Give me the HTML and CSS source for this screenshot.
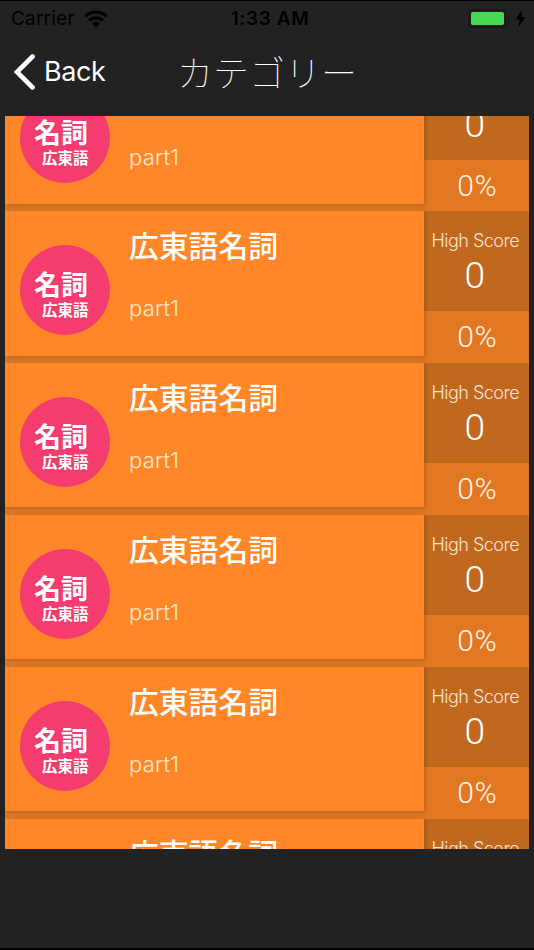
FILE: index.html
```html
<!DOCTYPE html>
<html lang="ja">
  <head>
    <meta charset="UTF-8" />
    <meta name="viewport" content="width=device-width, initial-scale=1.0" />
    <title>カテゴリー</title>
    <link rel="stylesheet" href="styles.css">
  </head>

  <body>
    <div class="status-bar">
      <div class="status-left">
        <span class="carrier">Carrier</span>
        <svg class="wifi" width="24" height="18" viewBox="0 0 24 18">
          <g fill="none" stroke="#000" stroke-width="3.2">
            <path d="M1.3 6.4a15.2 15.2 0 0 1 21.4 0" />
            <path d="M5.2 10.6a9.7 9.7 0 0 1 13.6 0" />
          </g>
          <path d="M12 17.3L8 13.4a5.7 5.7 0 0 1 8 0z" />
        </svg>
      </div>
      <div class="clock">1:33 AM</div>
      <div class="status-right">
        <div class="battery"><span class="battery-level"></span></div>
        <svg width="4" height="8" viewBox="0 0 4 8"><path d="M1 1q3 3 0 6z" fill="#111" /></svg>
        <svg class="bolt" width="11" height="17" viewBox="0 0 11 17">
          <path d="M7 0L0.5 9.6h4L3.6 17 10.5 6.9h-4z" />
        </svg>
      </div>
    </div>

    <div class="nav-bar">
      <div class="back">
        <svg width="22" height="36" viewBox="0 0 22 36">
          <path d="M18.6 2.5L3 18l15.6 15.5" fill="none" stroke="#fff" stroke-width="4.6" stroke-linecap="round" />
        </svg>
        <span class="back-label">Back</span>
      </div>
      <h1 class="title">カテゴリー</h1>
    </div>

    <div class="list" id="list"></div>

    <script>
      const rows = 6;
      const list = document.getElementById("list");

      for (let i = 0; i < rows; i++) {
        list.innerHTML += `
          <div class="row">
            <div class="card">
              <div class="badge">
                <span class="badge-big">名詞</span>
                <span class="badge-small">広東語</span>
              </div>
              <div class="info">
                <div class="name">広東語名詞</div>
                <div class="part">part1</div>
              </div>
            </div>
            <div class="score">
              <div class="high-score">
                <div class="label">High Score</div>
                <div class="points">0</div>
              </div>
              <div class="percent">0%</div>
            </div>
          </div>`;
      }
    </script>
  </body>
</html>
```

FILE: styles.css
```css
* {
  box-sizing: border-box;
}

body {
  background-color: #222;
  color: #fff;
  font-family: Inter, "Noto Sans CJK JP", sans-serif;
  margin: 0;
  height: 950px;
  overflow: hidden;
  border-top: 1px solid #000;
  border-bottom: 2px solid #000;
}

.status-bar {
  display: grid;
  grid-template-columns: 1fr auto 1fr;
  align-items: center;
  height: 35px;
  padding: 0 8px 0 11px;
  color: #000;
  font-size: 19px;
}

.status-left,
.status-right {
  display: flex;
  align-items: center;
}

.carrier {
  letter-spacing: 0.2px;
}

.wifi {
  margin-left: 9px;
}

.clock {
  font-weight: 600;
  letter-spacing: 0.6px;
  padding-left: 3px;
}

.status-right {
  justify-content: flex-end;
}

.battery {
  width: 39px;
  height: 19px;
  border: 2px solid #191919;
  border-radius: 5px;
  padding: 1px;
  display: flex;
}

.battery-level {
  flex: 1;
  background-color: #48d753;
  border-radius: 2px;
}

.bolt {
  margin-left: 4px;
}

.nav-bar {
  display: grid;
  grid-template-columns: 1fr auto 1fr;
  align-items: center;
  height: 72px;
  padding: 0 14px;
}

.back {
  display: flex;
  align-items: center;
  height: 36px;
  margin-bottom: 1px;
}

.back-label {
  font-size: 27px;
  letter-spacing: -0.4px;
  margin-left: 8px;
}

.title {
  font-family: "Noto Sans CJK JP", sans-serif;
  font-weight: 100;
  font-size: 36px;
  line-height: 52px;
  margin: 0 0 3px;
}

.list {
  height: 733px;
  margin: 8px 5px 0;
  overflow: hidden;
  background-color: #e27922;
}

.row {
  display: flex;
  height: 151.9px;
}

.row:first-child {
  margin-top: -56.5px;
}

.card {
  display: flex;
  width: 418.5px;
  height: 144.2px;
  background-color: #ff8728;
  box-shadow: 1px 1px 5px rgba(0, 0, 0, 0.22);
  position: relative;
}

.badge {
  display: flex;
  flex-direction: column;
  width: 90px;
  height: 90px;
  margin: 33.5px 0 0 15px;
  border-radius: 50%;
  background-color: #f53c6e;
  font-family: "Noto Sans CJK JP", sans-serif;
  font-weight: 700;
}

.badge-big {
  font-size: 27px;
  line-height: 28px;
  margin: 25px 0 0 14px;
}

.badge-small {
  font-size: 15.5px;
  line-height: 18px;
  margin: 2px 0 0 22px;
}

.info {
  margin-left: 19px;
}

.name {
  font-family: "Noto Sans CJK JP", sans-serif;
  font-weight: 500;
  font-size: 29.8px;
  line-height: 36px;
  margin-top: 15px;
}

.part {
  font-weight: 300;
  font-size: 22px;
  line-height: 28px;
  letter-spacing: 0.2px;
  margin-top: 32px;
  color: #ffe7d4;
}

.score {
  flex: 1;
  text-align: center;
  font-weight: 300;
}

.high-score {
  height: 100px;
  padding-top: 18px;
  background-color: #c1681f;
  border-top-right-radius: 4px;
}

.label {
  font-size: 18px;
  line-height: 24px;
  letter-spacing: -0.5px;
  padding-right: 2px;
  color: #f9e3d0;
  white-space: nowrap;
}

.points {
  font-family: Roboto, sans-serif;
  font-size: 37px;
  line-height: 46px;
  padding-right: 3px;
}

.percent {
  font-family: Roboto, sans-serif;
  font-size: 30px;
  line-height: 52px;
  letter-spacing: 0.5px;
  padding-left: 2px;
  color: #fff1e4;
}
```
